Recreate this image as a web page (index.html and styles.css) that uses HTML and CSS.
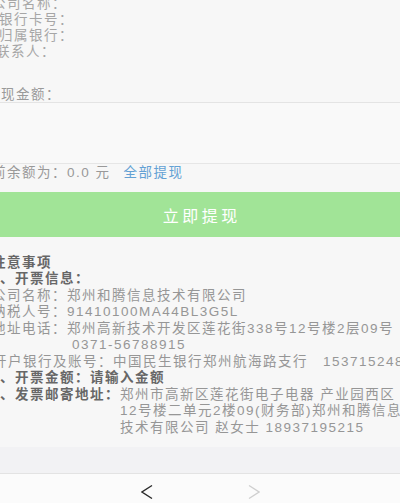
FILE: index.html
```html
<!DOCTYPE html>
<html lang="zh-CN">
<head>
<meta charset="utf-8">
<title>提现</title>
<link rel="stylesheet" href="styles.css">
</head>
<body>
<main class="page">
  <section class="info">
    <div class="info-row shift-8">公司名称：</div>
    <div class="info-row shift-1">银行卡号：</div>
    <div class="info-row shift-1">归属银行：</div>
    <div class="info-row shift-4">联系人：</div>
  </section>

  <div class="amount-label">提现金额：</div>
  <div class="amount-input"></div>

  <div class="balance">当前余额为：0.0 元<a class="all">全部提现</a></div>

  <button class="submit" type="button">立即提现</button>

  <section class="notes">
    <div class="title">注意事项</div>
    <div class="heading">一、开票信息：</div>
    <div class="row"><span class="label">公司名称：</span><span class="value">郑州和腾信息技术有限公司</span></div>
    <div class="row"><span class="label">纳税人号：</span><span class="value">91410100MA44BL3G5L</span></div>
    <div class="row"><span class="label">地址电话：</span><span class="value">郑州高新技术开发区莲花街338号12号楼2层09号<br><span class="phone">0371-56788915</span></span></div>
    <div class="row bank"><span class="label">开户银行及账号：</span><span class="value">中国民生银行郑州航海路支行　15371524888</span></div>
    <div class="row heading"><span class="label">二、开票金额：</span><span class="value">请输入金额</span></div>
    <div class="row heading"><span class="label">三、发票邮寄地址：</span><span class="value plain">郑州市高新区莲花街电子电器 产业园西区<br>12号楼二单元2楼09(财务部)郑州和腾信息<br>技术有限公司 赵女士 18937195215</span></div>
  </section>

  <div class="toolbar"></div>
  <nav class="navbar">
    <svg class="chev" width="12" height="14" viewBox="0 0 12 14"><polyline points="11,0.5 1,7 11,13.5" fill="none" stroke="#2b2b2b" stroke-width="1.3"/></svg>
    <svg class="chev" width="12" height="14" viewBox="0 0 12 14"><polyline points="1,0.5 11,7 1,13.5" fill="none" stroke="#cfcfcf" stroke-width="1.3"/></svg>
  </nav>
</main>
</body>
</html>
```

FILE: styles.css
```css
html, body {
  margin: 0;
  padding: 0;
  width: 400px;
  height: 503px;
  overflow: hidden;
  background: #f7f7f7;
}

.page {
  font-family: "Liberation Sans", "Noto Sans CJK SC", sans-serif;
  font-size: 13.5px;
  letter-spacing: 1.5px;
  color: #999999;
  white-space: nowrap;
}

.info {
  margin-top: -4px;
  line-height: 16px;
  color: #a6a6a6;
}

.shift-8 { margin-left: -8px; }
.shift-4 { margin-left: -4px; }
.shift-1 { margin-left: -1px; }

.amount-label {
  margin-top: 27px;
  margin-left: -14px;
  line-height: 15px;
  color: #9a9a9a;
  border-bottom: 1px solid #e4e4e4;
}

.amount-input {
  height: 60px;
  background: #f9f9f9;
  border-bottom: 1px solid #e6e6e6;
}

.balance {
  padding: 1px 0 11px;
  margin-left: -23px;
  line-height: 16px;
  color: #999999;
}

.all {
  margin-left: 13px;
  color: #63a1d4;
}

.submit {
  display: block;
  width: 100%;
  height: 45px;
  margin: 0;
  padding: 0;
  border: none;
  background: #a1e497;
  color: #ffffff;
  font-family: "Liberation Sans", "Noto Sans CJK SC", sans-serif;
  font-size: 16px;
  letter-spacing: 3.5px;
  text-indent: 3.5px;
}

.notes {
  padding: 17.75px 0 10.5px;
  line-height: 16.5px;
  color: #969696;
}

.title {
  margin-left: -8px;
  font-weight: bold;
  color: #666666;
}

.heading {
  margin-left: -15px;
  font-weight: bold;
  color: #676767;
}

.row {
  display: flex;
  margin-left: -8px;
}

.row.heading {
  margin-left: -15px;
}

.row.bank {
  margin-left: -7px;
}

.label {
  flex: none;
}

.value {
  flex: none;
}

.plain {
  font-weight: normal;
  color: #969696;
}

.phone {
  padding-left: 5px;
}

.toolbar {
  height: 26px;
  background: #f2f2f4;
  border-bottom: 1px solid #e3e3e3;
}

.navbar {
  height: 30px;
  background: #fbfbfb;
  display: flex;
  justify-content: center;
  align-items: flex-start;
  gap: 95px;
  padding-top: 11px;
  box-sizing: border-box;
}

.chev {
  display: block;
}
```
